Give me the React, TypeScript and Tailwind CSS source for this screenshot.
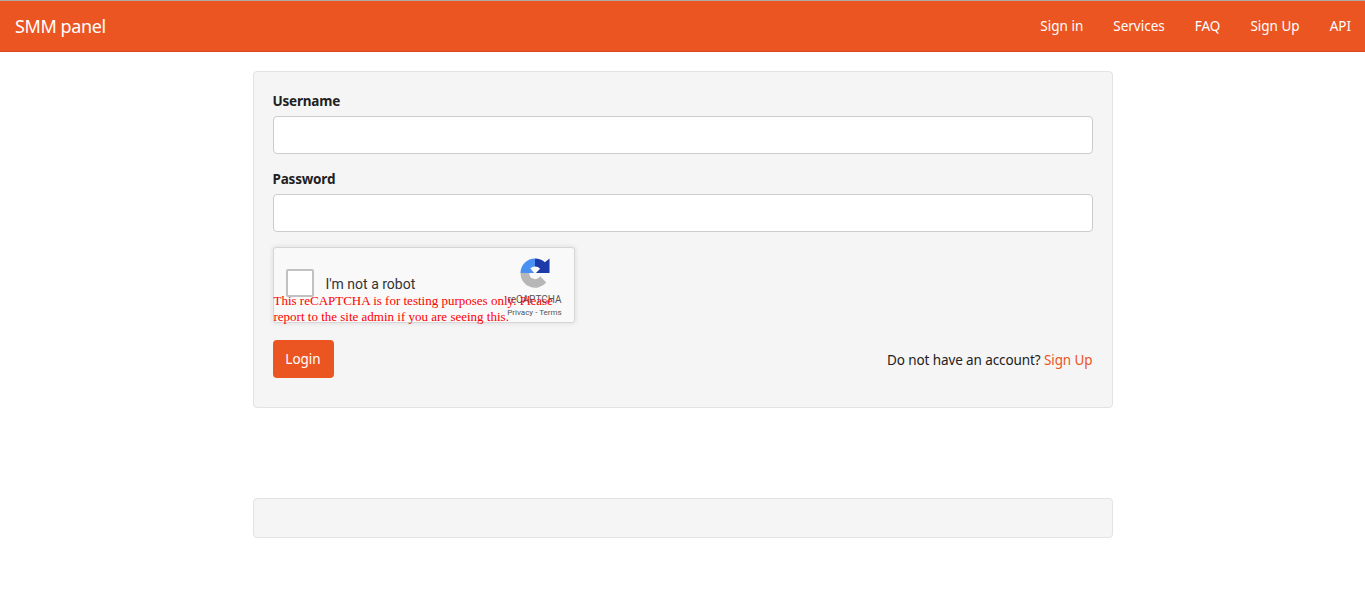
import React from 'react';

const fontUi = 'font-["Noto_Sans","Open_Sans",sans-serif]';

const navLinks = ['Sign in', 'Services', 'FAQ', 'Sign Up', 'API'];

const RecaptchaLogo: React.FC = () => (
  <svg width="30" height="30" viewBox="0 0 32 32" className="block">
    {/* grey lower arc */}
    <path d="M0.5 16 H10 A6.2 6.2 0 0 0 21.5 19.5 L28 26 A15.5 15.5 0 0 1 0.5 16 Z" fill="#b7b7b7" />
    {/* light blue left arc */}
    <path d="M0.5 16 A15.5 15.5 0 0 1 16 0.5 V9 A7 7 0 0 0 11 11 L15 16 Z" fill="#4a90f2" />
    {/* dark blue right arc */}
    <path d="M16 0.5 A15.5 15.5 0 0 1 26.5 4.5 L31.5 0.5 V16 H17 L21.5 11.5 A7 7 0 0 0 16 9 Z" fill="#1c3aa9" />
  </svg>
);

const Recaptcha: React.FC = () => (
  <div className="relative w-[302px] h-[76px] bg-[#f9f9f9] border border-[#d6d6d6] rounded-[3px] shadow-[0_0_4px_1px_rgba(0,0,0,0.08)] font-['Roboto',sans-serif]">
    <div className="flex items-center h-full pl-3 pb-[4px]">
      <div className="w-[28px] h-[28px] bg-white border-2 border-[#c1c1c1] rounded-[2px]" />
      <span className="ml-3 pt-[2px] text-sm text-[#333]">I'm not a robot</span>
    </div>
    <div className="absolute left-[233px] top-[10px] w-[56px] flex flex-col items-center">
      <RecaptchaLogo />
      <span className="mt-[6px] text-[10px] leading-[12px] text-[#555]">reCAPTCHA</span>
      <span className="mt-px text-[8px] leading-[12px] text-[#555] whitespace-nowrap">Privacy - Terms</span>
    </div>
    <div className="absolute left-0 top-[45px] w-[304px] font-['Liberation_Serif',serif] text-[13px] leading-[16px] text-[#ff0000]">
      This reCAPTCHA is for testing purposes only. Please report to the site admin if you are seeing this.
    </div>
  </div>
);

const Field: React.FC<{ label: string }> = ({ label }) => (
  <div className="mb-[15px]">
    <label className="block mb-[5px] text-[13.5px] leading-[20px] font-bold tracking-[-0.2px] text-[#212121]">{label}</label>
    <input className="block w-full h-[38px] bg-white border border-[#ccc] rounded-[4px] outline-none" />
  </div>
);

export default function App() {
  return (
    <div className={`min-h-[606px] bg-white ${fontUi} text-[13.5px] text-[#212121]`}>
      {/* Navbar */}
      <header className="flex items-center justify-between h-[52px] px-[15px] bg-[#eb5522] border-t border-t-[#b0a8a4] border-b border-b-[#d9481a] text-white">
        <a className="text-lg leading-none tracking-[-0.4px]">SMM panel</a>
        <nav className="flex items-center gap-[30px] mr-[-1px]">
          {navLinks.map(link => (
            <a key={link} className="text-[13.5px] leading-[20px]">{link}</a>
          ))}
        </nav>
      </header>

      <main className="w-[860px] mx-auto pt-[19px]">
        {/* Login card */}
        <div className="h-[337px] px-[19px] pt-[19px] bg-[#f5f5f5] border border-[#e3e3e3] rounded-[4px]">
          <Field label="Username" />
          <Field label="Password" />
          <Recaptcha />
          <div className="flex items-center justify-between mt-[17px]">
            <button className="w-[61px] h-[38px] bg-[#eb5522] text-white text-[13.5px] rounded-[4px]">Login</button>
            <p className="pt-[2px] tracking-[-0.1px]">
              Do not have an account? <a className="text-[#eb5522]">Sign Up</a>
            </p>
          </div>
        </div>

        {/* Footer well */}
        <div className="h-[40px] mt-[90px] bg-[#f5f5f5] border border-[#e3e3e3] rounded-[4px]" />
      </main>
    </div>
  );
}
